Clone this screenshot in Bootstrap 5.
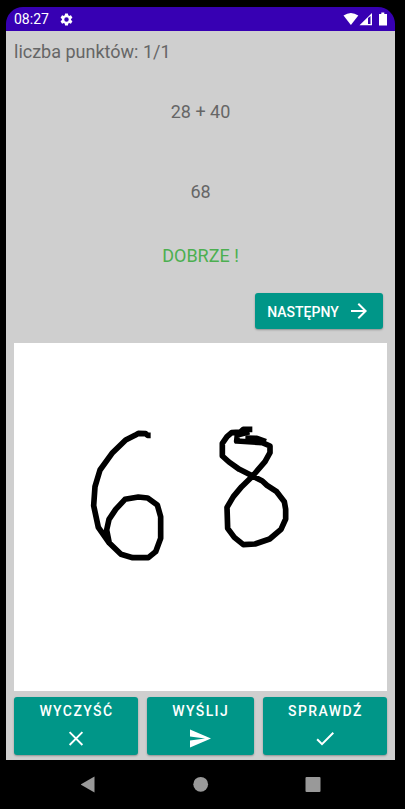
<!DOCTYPE html>
<html lang="pl">
<head>
<meta charset="utf-8">
<meta name="viewport" content="width=device-width, initial-scale=1">
<title>Liczba punktów</title>
<link href="https://cdn.jsdelivr.net/npm/bootstrap@5.3.0/dist/css/bootstrap.min.css" rel="stylesheet">
<style>
body{background:#000;font-family:Roboto,"Noto Sans",sans-serif;height:809px;width:405px;padding:7px 10px 0 6px}
svg{display:block;flex:none}
.status{height:24px;background:#3700b3;border-radius:17px 17px 0 0;padding:0 8px;font-size:14px;line-height:25px}
.app{height:729px;background:#cfcfcf;padding:0 8px;color:#666;font-size:18px;line-height:24px}
.points{padding-top:9px;height:69px}
.task{height:80px}
.answer{height:64px}
.result{height:49px;color:#4caf50}
.btn-teal,.btn-teal:hover{background:#009688;color:#fff;border:0;border-radius:3px;box-shadow:0 1px 2px rgba(0,0,0,.3);font-weight:500;font-size:14px;padding:0;line-height:20px}
.next{width:128px;height:36px;margin-right:4px}
.next span{padding-top:2px}
.sheet{height:348px;margin-top:14px}
.actions{margin-top:5.5px;gap:9px}
.actions .btn-teal{height:58px;letter-spacing:1.4px;padding-top:4.5px}
.actions span{padding-left:1.4px}
.w-first{width:123.5px}.w-mid{width:107px}.w-last{width:124.5px}
.sysbar{height:42px;margin-top:3px}
</style>
</head>
<body class="overflow-hidden">
<header class="status d-flex align-items-center text-white">
  <span>08:27</span>
  <svg class="ms-2" width="15" height="15" viewBox="0 0 24 24" fill="#fff" transform="translate(2 0)"><path d="M19.14 12.94c.04-.3.06-.61.06-.94s-.02-.64-.07-.94l2.03-1.58a.5.5 0 0 0 .12-.61l-1.92-3.32a.5.5 0 0 0-.59-.22l-2.39.96a7 7 0 0 0-1.62-.94l-.36-2.54a.5.5 0 0 0-.48-.41h-3.84a.5.5 0 0 0-.47.41l-.36 2.54c-.59.24-1.13.57-1.62.94l-2.39-.96a.5.5 0 0 0-.59.22L2.74 8.87a.5.5 0 0 0 .12.61l2.03 1.58a6 6 0 0 0-.02 1.88l-2.03 1.58a.5.5 0 0 0-.12.61l1.92 3.32c.12.22.37.29.59.22l2.39-.96c.5.38 1.03.7 1.62.94l.36 2.54c.05.24.24.41.48.41h3.84c.24 0 .44-.17.47-.41l.36-2.54c.59-.24 1.13-.56 1.62-.94l2.39.96c.22.08.47 0 .59-.22l1.92-3.32a.5.5 0 0 0-.12-.61zM12 15.6a3.6 3.6 0 1 1 0-7.2 3.6 3.6 0 0 1 0 7.2z"/></svg>
  <svg class="ms-auto" width="44" height="14" viewBox="0 0 44 14" fill="#fff"><path d="M.5 3.6Q7.900 -1.600 15.300 3.600L7.900 13z"/><path fill-rule="evenodd" d="M16.500 13.200 29 1V13.200zM25 6V12h2.500V4z"/><path d="M36 2h2.300V.5h3V2H44v11.500h-8z"/></svg>
</header>
<main class="app d-flex flex-column">
  <div class="points">liczba punktów: 1/1</div>
  <div class="task text-center">28 + 40</div>
  <div class="answer text-center">68</div>
  <div class="result text-center">DOBRZE !</div>
  <button class="btn btn-teal next align-self-end d-flex align-items-center justify-content-center">
    <span>NASTĘPNY</span>
    <svg class="ms-2" width="24" height="24" viewBox="0 0 24 24" fill="#fff"><path d="m12 4-1.41 1.41L16.17 11H4v2h12.17l-5.58 5.59L12 20l8-8z"/></svg>
  </button>
  <div class="sheet bg-white">
    <svg width="373" height="348" viewBox="14 343 373 348" fill="none" stroke="#000" stroke-linejoin="round">
      <g transform="translate(80 420) scale(.33333)" stroke-width="17"><path d="M212 46H203L197 41 175 40 165 46 137 60 96 100 60 150 45 200 41 257 55 322 88 369 123 403 158 413H205L227 395 242 355V290L232 255 203 234 175 231 135 238 107 268 87 298 80 330 88 370"/></g>
      <g transform="translate(205 420) scale(.33333)" stroke-width="17"><path d="M142 28H115L106 36 80 38 66 50 52 70V108L72 126 103 148 143 168 172 183 186 196 215 215 238 245 242 268V297L228 328 194 357 150 372 115 374 88 352 68 325 66 262 85 230 110 200 143 168 180 125 195 98V78L172 68 95 63 97 45 133 35"/><path d="M121 56 155 57 182 67" stroke-width="21"/></g>
    </svg>
  </div>
  <div class="actions d-flex">
    <button class="btn btn-teal w-first d-flex flex-column align-items-center"><span>WYCZYŚĆ</span>
      <svg class="mt-1" width="24" height="28" viewBox="0 0 24 28" fill="none" stroke="#fff" stroke-width="1.9"><path d="m5.600 7.200 12.800 12.800m0-12.800L5.600 20"/></svg></button>
    <button class="btn btn-teal w-mid d-flex flex-column align-items-center"><span>WYŚLIJ</span>
      <svg class="mt-1" width="24" height="28" viewBox="0 -1.500 24 28" fill="#fff"><path d="M2.01 21 23 12 2.01 3 2 10l15 2-15 2z"/></svg></button>
    <button class="btn btn-teal w-last d-flex flex-column align-items-center"><span>SPRAWDŹ</span>
      <svg class="mt-1" width="24" height="28" viewBox="0 -1.500 24 28" fill="#fff"><path d="M9 16.170 4.830 12l-1.420 1.410L9 19 21 7l-1.410-1.410z"/></svg></button>
  </div>
</main>
<footer class="sysbar d-flex justify-content-center">
  <svg width="240" height="42" viewBox="0 0 240 42" fill="#999"><path d="M-.5 21.500 13.500 13.500v16z"/><circle cx="119.700" cy="21.300" r="7.400"/><rect x="224.500" y="14" width="15" height="15" rx="1"/></svg>
</footer>
<script src="https://cdn.jsdelivr.net/npm/bootstrap@5.3.0/dist/js/bootstrap.bundle.min.js"></script>
</body>
</html>
